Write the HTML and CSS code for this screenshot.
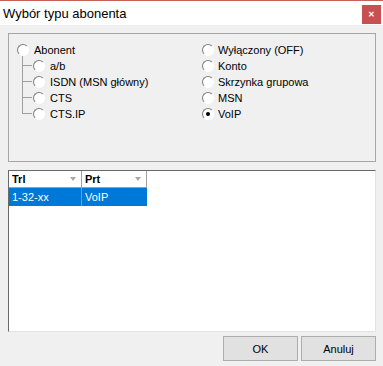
FILE: index.html
```html
<!DOCTYPE html>
<html>
<head>
<meta charset="utf-8">
<link rel="stylesheet" href="styles.css">
</head>
<body>
<div class="window">
  <div class="titlebar">
    <span class="title">Wybór typu abonenta</span>
    <span class="close">&#x2715;</span>
  </div>
  <div class="content">
    <div class="group">
      <div class="col left">
        <div class="row"><span class="radio"></span><span>Abonent</span></div>
        <div class="sub">
          <div class="row branch first"><span class="radio"></span><span>a/b</span></div>
          <div class="row branch"><span class="radio"></span><span>ISDN (MSN główny)</span></div>
          <div class="row branch"><span class="radio"></span><span>CTS</span></div>
          <div class="row branch"><span class="radio"></span><span>CTS.IP</span></div>
        </div>
      </div>
      <div class="col right">
        <div class="row"><span class="radio"></span><span>Wyłączony (OFF)</span></div>
        <div class="row"><span class="radio"></span><span>Konto</span></div>
        <div class="row"><span class="radio"></span><span>Skrzynka grupowa</span></div>
        <div class="row"><span class="radio"></span><span>MSN</span></div>
        <div class="row"><span class="radio checked"></span><span>VoIP</span></div>
      </div>
    </div>
    <div class="list">
      <div class="lrow header">
        <div class="cell c1"><span>Trl</span><span class="arrow"></span></div>
        <div class="cell c2"><span>Prt</span><span class="arrow"></span></div>
      </div>
      <div class="lrow selected">
        <div class="cell c1">1-32-xx</div>
        <div class="cell c2">VoIP</div>
      </div>
    </div>
    <div class="buttons">
      <button class="btn">OK</button>
      <button class="btn">Anuluj</button>
    </div>
  </div>
</div>
</body>
</html>
```
FILE: styles.css
```css
html, body {
  margin: 0;
  padding: 0;
}
body {
  width: 383px;
  height: 366px;
  background: #f0f0f0;
  font-family: "Liberation Sans", Arial, sans-serif;
  font-size: 11px;
  color: #000;
  overflow: hidden;
}
.window {
  display: flex;
  flex-direction: column;
  height: 366px;
}
.titlebar {
  height: 24px;
  background: #fff;
  border-top: 1px solid #c9605c;
  display: flex;
  align-items: center;
  justify-content: space-between;
  padding: 0 2px 0 3px;
}
.title {
  font-family: "Liberation Sans", Arial, sans-serif;
  font-size: 13px;
  color: #000;
  margin-top: 1px;
}
.close {
  width: 19px;
  height: 19px;
  background: #c75050;
  color: #fff;
  font-size: 8px;
  font-weight: bold;
  display: flex;
  align-items: center;
  justify-content: center;
  margin-top: 2px;
}
.content {
  display: flex;
  flex-direction: column;
  padding: 8px 7px 0 8px;
}
.group {
  border: 1px solid #a6a6a6;
  display: flex;
  padding: 8px 0 0 8px;
  box-sizing: content-box;
  height: 119px;
}
.col.left {
  width: 185px;
}
.col {
  display: flex;
  flex-direction: column;
}
.row {
  height: 16px;
  display: flex;
  align-items: center;
  gap: 5px;
  position: relative;
  white-space: nowrap;
}
.col.right .row {
  gap: 4px;
}
.radio {
  width: 10px;
  height: 10px;
  border-radius: 50%;
  background: #fff;
  border: 1px solid;
  border-color: #7c7c7c #fff #fff #7c7c7c;
  flex: none;
  display: flex;
  align-items: center;
  justify-content: center;
}
.radio.checked::after {
  content: "";
  width: 4px;
  height: 4px;
  border-radius: 50%;
  background: #000;
}
.sub {
  display: flex;
  flex-direction: column;
  padding-left: 16px;
}
.branch::before {
  content: "";
  position: absolute;
  left: -11px;
  top: -8px;
  width: 10px;
  height: 16px;
  border-left: 1px solid #a0a0a0;
  border-bottom: 1px solid #a0a0a0;
  box-sizing: border-box;
}
.branch.first::before {
  top: -2px;
  height: 10px;
}
.list {
  margin-top: 8px;
  height: 160px;
  background: #fff;
  border: 1px solid;
  border-color: #696969 #e3e3e3 #e3e3e3 #696969;
  display: flex;
  flex-direction: column;
}
.lrow {
  display: flex;
}
.cell {
  box-sizing: border-box;
  display: flex;
  align-items: center;
  padding-left: 3px;
}
.c1 { width: 73px; }
.c2 { width: 65px; }
.header .cell {
  height: 17px;
  font-weight: bold;
  border-right: 1px solid #a0a0a0;
  border-bottom: 1px solid #a0a0a0;
  justify-content: space-between;
  padding-right: 5px;
}
.arrow {
  width: 0;
  height: 0;
  border-left: 3px solid transparent;
  border-right: 3px solid transparent;
  border-top: 4px solid #a8a8a8;
}
.selected .cell {
  height: 18px;
  background: #0078d7;
  color: #fff;
}
.selected .c1 {
  border-right: 1px solid #5aa3e2;
}
.buttons {
  display: flex;
  justify-content: flex-end;
  gap: 3px;
  margin-top: 4px;
}
.btn {
  width: 75px;
  height: 25px;
  background: #e1e1e1;
  border: 1px solid #adadad;
  font-family: "Liberation Sans", Arial, sans-serif;
  font-size: 11px;
  color: #000;
  padding: 0;
  margin: 0;
}
```
